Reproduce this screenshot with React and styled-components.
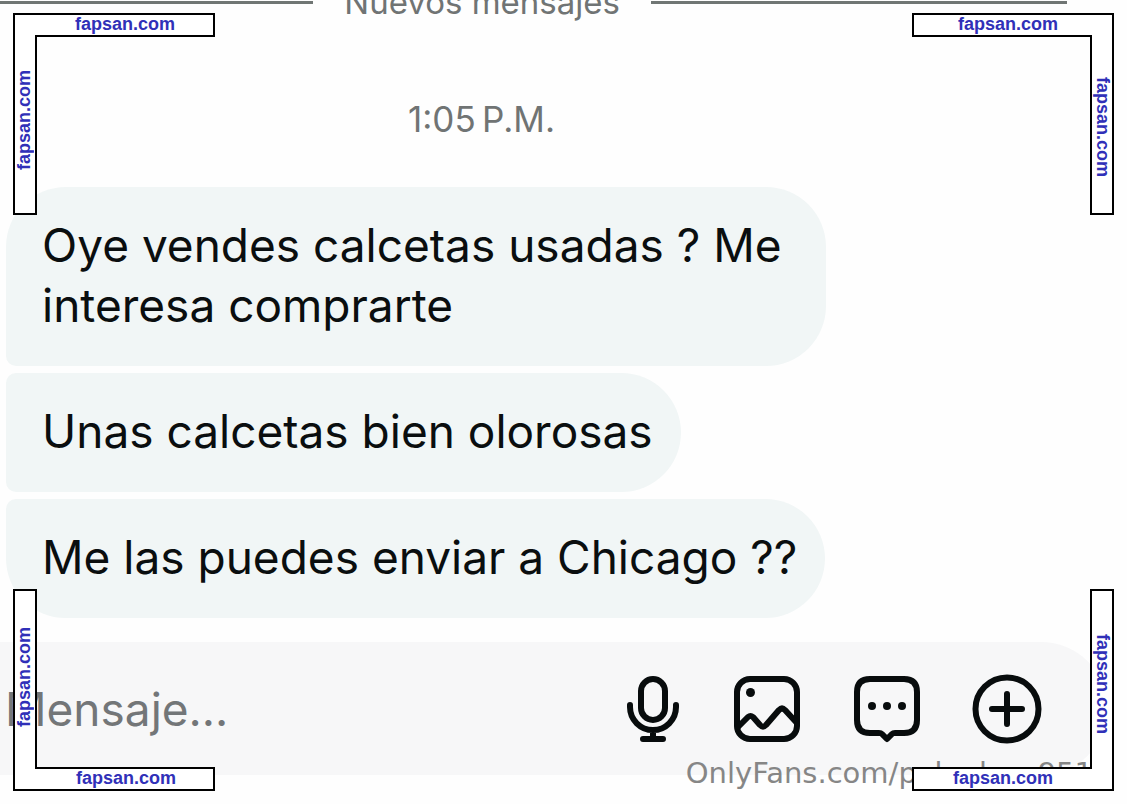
import React from 'react';
import styled, { createGlobalStyle } from 'styled-components';

const GlobalStyle = createGlobalStyle`
  *, *::before, *::after { box-sizing: border-box; }
  body {
    margin: 0;
    background: #fefefe;
    color: #0a0e0f;
    font-family: Inter, "Liberation Sans", sans-serif;
  }
`;

const Page = styled.main`
  position: relative;
  display: flex;
  flex-direction: column;
  min-height: 100vh;
  overflow: hidden;
`;

const NewMessages = styled.div`
  display: flex;
  align-items: center;
  gap: 31px;
  margin-top: -20px;
  padding-right: 60px;
  color: #707474;
  font-size: 33px;
  line-height: 44px;
  white-space: nowrap;
`;

const Rule = styled.span`
  flex: ${({ $grow }) => $grow} 1 0;
  height: 3px;
  background: #707674;
`;

const Time = styled.time`
  align-self: center;
  margin: 73px 164px 0 0;
  color: #707474;
  font-size: 35px;
  line-height: 44px;
`;

const Thread = styled.ul`
  display: flex;
  flex-direction: column;
  align-items: flex-start;
  gap: 7px;
  margin: 46px 0 0;
  padding: 0 6px;
  list-style: none;
`;

const Bubble = styled.li`
  max-width: 820px;
  padding: 28px 28px 31px 36px;
  border-radius: ${({ $first, $last }) =>
    `${$first ? 60 : 10}px 60px 60px ${$last ? 60 : 10}px`};
  background: #f1f6f6;
  font-size: 46px;
  line-height: 60px;
`;

const Composer = styled.form`
  display: flex;
  align-items: center;
  justify-content: space-between;
  height: 133px;
  margin: 24px 20px 0 0;
  padding: 0 60px 0 5px;
  border-radius: 0 66px 66px 0;
  background: #f7f7f8;
`;

const MessageInput = styled.input`
  flex: 1;
  min-width: 0;
  padding: 0;
  border: 0;
  outline: 0;
  background: transparent;
  color: inherit;
  font: inherit;
  font-size: 46px;
  line-height: 60px;
  &::placeholder { color: #737678; opacity: 1; }
`;

const Actions = styled.div`
  display: flex;
  gap: 40px;
`;

const IconButton = styled.button`
  display: grid;
  place-items: center;
  width: 80px;
  height: 80px;
  padding: 0;
  border: 0;
  background: transparent;
  color: #080c0d;
  svg {
    width: 72px;
    height: 72px;
    fill: none;
    stroke: currentColor;
    stroke-width: 6;
    stroke-linecap: round;
    stroke-linejoin: round;
  }
`;

const Credit = styled.span`
  position: absolute;
  right: 34px;
  bottom: 14px;
  color: #868686;
  font-family: "DejaVu Sans", sans-serif;
  font-size: 29px;
  line-height: 34px;
`;

const Frame = styled.div`
  position: absolute;
  ${({ $v }) => $v}: 13px;
  ${({ $h }) => $h}: 13px;
  width: 202px;
  height: 202px;
  pointer-events: none;
  svg {
    display: block;
    transform: scale(${({ $h }) => ($h === 'right' ? -1 : 1)}, ${({ $v }) => ($v === 'bottom' ? -1 : 1)});
  }
`;

const FrameLabel = styled.a`
  position: absolute;
  display: grid;
  place-items: center;
  color: #3030b8;
  font: bold 18px/22px "Liberation Sans", sans-serif;
  text-decoration: none;
`;

const AcrossLabel = styled(FrameLabel)`
  ${({ $v }) => $v}: ${({ $v }) => ($v === 'bottom' ? 2 : 0)}px;
  left: ${({ $start }) => $start}px;
  height: 22px;
`;

const DownLabel = styled(FrameLabel)`
  ${({ $h }) => $h}: 0;
  top: ${({ $start }) => $start}px;
  width: 22px;
  writing-mode: vertical-rl;
  transform: rotate(${({ $h }) => ($h === 'left' ? 180 : 0)}deg);
`;

function CornerFrame({ v, h, across, down }) {
  return (
    <Frame $v={v} $h={h}>
      <svg width="202" height="202" aria-hidden="true">
        <path d="M1 1H201V23H23V201H1Z" fill="#fff" stroke="#000" strokeWidth="2" />
      </svg>
      <AcrossLabel href="#" $v={v} $start={across}>fapsan.com</AcrossLabel>
      <DownLabel href="#" $h={h} $start={down}>fapsan.com</DownLabel>
    </Frame>
  );
}

const messages = [
  'Oye vendes calcetas usadas ? Me interesa comprarte',
  'Unas calcetas bien olorosas',
  'Me las puedes enviar a Chicago ??',
];

export default function App() {
  return (
    <>
      <GlobalStyle />
      <Page>
        <NewMessages>
          <Rule $grow={314} />
          Nuevos mensajes
          <Rule $grow={417} />
        </NewMessages>
        <Time>1:05{'\u202f'}P.M.</Time>
        <Thread>
          {messages.map((text, i) => (
            <Bubble key={text} $first={i === 0} $last={i === messages.length - 1}>{text}</Bubble>
          ))}
        </Thread>
        <Composer onSubmit={(e) => e.preventDefault()}>
          <MessageInput aria-label="Mensaje" placeholder="Mensaje..." />
          <Actions>
            <IconButton type="button" aria-label="Grabar audio">
              <svg viewBox="0 0 72 72">
                <rect x="30" y="6" width="24" height="41" rx="12" />
                <path d="M19 32V34A23 23 0 0 0 65 34V32M42 57V66M32 66H52" />
              </svg>
            </IconButton>
            <IconButton type="button" aria-label="Enviar imagen">
              <svg viewBox="0 0 72 72">
                <rect x="6" y="6" width="60" height="60" rx="13" />
                <circle cx="19.500" cy="19.500" r="4.500" fill="currentColor" stroke="none" />
                <path d="M7 54L17 44Q19.500 42 22 44L29 52Q32 55 35 52L48 37Q51 34 54 37L65 49" />
              </svg>
            </IconButton>
            <IconButton type="button" aria-label="Respuestas rápidas">
              <svg viewBox="0 0 72 72">
                <path d="M19 6H53Q66 6 66 19V47Q66 60 53 60H44Q42 60 41 61L36 66L31 61Q30 60 28 60H19Q6 60 6 47V19Q6 6 19 6Z" />
                <g fill="currentColor" stroke="none">
                  <circle cx="21" cy="33" r="4" /><circle cx="36" cy="33" r="4" /><circle cx="51" cy="33" r="4" />
                </g>
              </svg>
            </IconButton>
            <IconButton type="button" aria-label="Añadir">
              <svg viewBox="0 0 72 72">
                <circle cx="36" cy="36" r="31.500" />
                <path d="M36 21V51M21 36H51" />
              </svg>
            </IconButton>
          </Actions>
        </Composer>
        <Credit>OnlyFans.com/pakadosa951</Credit>
        <CornerFrame v="top" h="left" across={62} down={57} />
        <CornerFrame v="top" h="right" across={46} down={64} />
        <CornerFrame v="bottom" h="left" across={63} down={38} />
        <CornerFrame v="bottom" h="right" across={41} down={45} />
      </Page>
    </>
  );
}
